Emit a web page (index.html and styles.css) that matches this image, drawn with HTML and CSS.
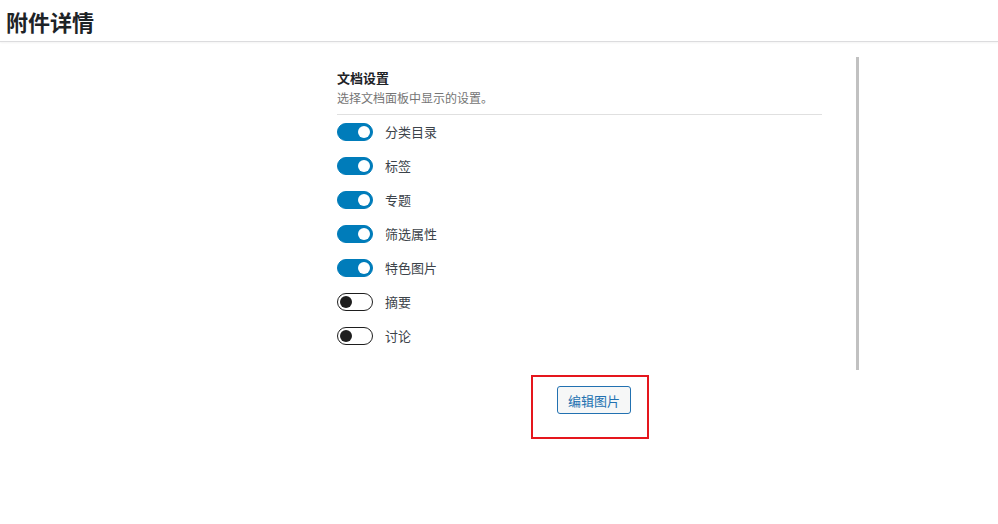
FILE: index.html
```html
<!DOCTYPE html>
<html lang="zh-CN">
<head>
  <meta charset="UTF-8">
  <title>附件详情</title>
  <link rel="stylesheet" href="styles.css">
</head>
<body>
  <header class="topbar">
    <h1>附件详情</h1>
  </header>
  <main class="content">
    <section class="panel">
      <h2>文档设置</h2>
      <p class="hint">选择文档面板中显示的设置。</p>
      <ul class="options">
        <li><span class="toggle on"></span>分类目录</li>
        <li><span class="toggle on"></span>标签</li>
        <li><span class="toggle on"></span>专题</li>
        <li><span class="toggle on"></span>筛选属性</li>
        <li><span class="toggle on"></span>特色图片</li>
        <li><span class="toggle"></span>摘要</li>
        <li><span class="toggle"></span>讨论</li>
      </ul>
    </section>
    <div class="highlight">
      <button class="edit-btn">编辑图片</button>
    </div>
  </main>
</body>
</html>
```

FILE: styles.css
```css
body {
  margin: 0;
  background: #fff;
  color: #1d2327;
  font-family: "Noto Sans CJK SC", "Noto Sans", sans-serif;
}
.topbar {
  height: 41px;
  border-bottom: 1px solid #dcdcde;
  box-shadow: 0 1px 2px rgba(0, 0, 0, 0.05);
  padding: 0 6px;
  display: flex;
  align-items: center;
}
.topbar h1 {
  margin: 0;
  font-size: 22px;
  font-weight: 700;
  color: #1d2327;
}
.content {
  padding-top: 15px;
  padding-left: 321px;
}
.panel {
  width: 503px;
  padding: 12px 16px 25px 16px;
  border-right: 3px solid #c1c1c1;
}
.panel h2 {
  margin: 0;
  font-size: 13px;
  line-height: 18px;
  font-weight: 700;
  width: 485px;
}
.hint {
  margin: 2px 0 0;
  font-size: 12px;
  line-height: 18px;
  color: #757575;
  width: 485px;
  padding-bottom: 7px;
  border-bottom: 1px solid #e0e0e0;
}
.options {
  list-style: none;
  margin: 0;
  padding: 8px 0 0;
  display: flex;
  flex-direction: column;
  gap: 16px;
}
.options li {
  display: flex;
  align-items: center;
  gap: 12px;
  font-size: 13px;
  line-height: 18px;
  color: #3c434a;
}
.toggle {
  box-sizing: border-box;
  width: 36px;
  height: 18px;
  border-radius: 9px;
  border: 1px solid #1e1e1e;
  background: #fff;
  position: relative;
  flex: none;
}
.toggle::after {
  content: "";
  position: absolute;
  top: 2px;
  left: 2px;
  width: 12px;
  height: 12px;
  border-radius: 50%;
  background: #1e1e1e;
}
.toggle.on {
  background: #007cba;
  border-color: #007cba;
}
.toggle.on::after {
  left: 20px;
  background: #fff;
}
.highlight {
  margin: 5px 0 0 210px;
  width: 114px;
  height: 60px;
  border: 2px solid #e5161d;
}
.edit-btn {
  margin: 9px 0 0 24px;
  height: 28px;
  padding: 0 10px;
  font-family: inherit;
  font-size: 13px;
  color: #2271b1;
  background: #f6f7f7;
  border: 1px solid #2271b1;
  border-radius: 3px;
}
```
